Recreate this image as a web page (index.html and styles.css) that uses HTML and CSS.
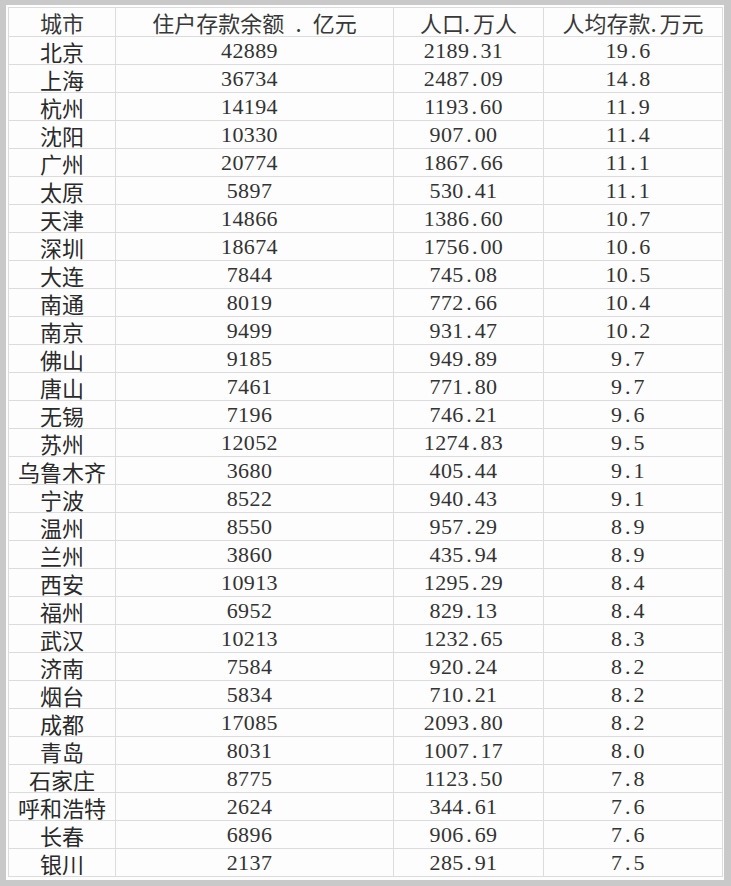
FILE: index.html
```html
<!DOCTYPE html>
<html lang="zh-CN">
<head>
<meta charset="utf-8">
<title>城市人均存款</title>
<link rel="stylesheet" href="styles.css">
</head>
<body>
<div class="frame">
<table class="sheet">
<colgroup><col class="c-city"><col class="c-dep"><col class="c-pop"><col class="c-per"></colgroup>
<thead>
<tr class="head"><th>城市</th><th>住户存款余额<span class="wp">.</span>亿元</th><th>人口<span class="hp">.</span>万人</th><th>人均存款<span class="hp">.</span>万元</th></tr>
</thead>
<tbody>
<tr><td class="city">北京</td><td class="num">42889</td><td class="num">2189<span class="pt">.</span>31</td><td class="num">19<span class="pt">.</span>6</td></tr>
<tr><td class="city">上海</td><td class="num">36734</td><td class="num">2487<span class="pt">.</span>09</td><td class="num">14<span class="pt">.</span>8</td></tr>
<tr><td class="city">杭州</td><td class="num">14194</td><td class="num">1193<span class="pt">.</span>60</td><td class="num">11<span class="pt">.</span>9</td></tr>
<tr><td class="city">沈阳</td><td class="num">10330</td><td class="num">907<span class="pt">.</span>00</td><td class="num">11<span class="pt">.</span>4</td></tr>
<tr><td class="city">广州</td><td class="num">20774</td><td class="num">1867<span class="pt">.</span>66</td><td class="num">11<span class="pt">.</span>1</td></tr>
<tr><td class="city">太原</td><td class="num">5897</td><td class="num">530<span class="pt">.</span>41</td><td class="num">11<span class="pt">.</span>1</td></tr>
<tr><td class="city">天津</td><td class="num">14866</td><td class="num">1386<span class="pt">.</span>60</td><td class="num">10<span class="pt">.</span>7</td></tr>
<tr><td class="city">深圳</td><td class="num">18674</td><td class="num">1756<span class="pt">.</span>00</td><td class="num">10<span class="pt">.</span>6</td></tr>
<tr><td class="city">大连</td><td class="num">7844</td><td class="num">745<span class="pt">.</span>08</td><td class="num">10<span class="pt">.</span>5</td></tr>
<tr><td class="city">南通</td><td class="num">8019</td><td class="num">772<span class="pt">.</span>66</td><td class="num">10<span class="pt">.</span>4</td></tr>
<tr><td class="city">南京</td><td class="num">9499</td><td class="num">931<span class="pt">.</span>47</td><td class="num">10<span class="pt">.</span>2</td></tr>
<tr><td class="city">佛山</td><td class="num">9185</td><td class="num">949<span class="pt">.</span>89</td><td class="num">9<span class="pt">.</span>7</td></tr>
<tr><td class="city">唐山</td><td class="num">7461</td><td class="num">771<span class="pt">.</span>80</td><td class="num">9<span class="pt">.</span>7</td></tr>
<tr><td class="city">无锡</td><td class="num">7196</td><td class="num">746<span class="pt">.</span>21</td><td class="num">9<span class="pt">.</span>6</td></tr>
<tr><td class="city">苏州</td><td class="num">12052</td><td class="num">1274<span class="pt">.</span>83</td><td class="num">9<span class="pt">.</span>5</td></tr>
<tr><td class="city">乌鲁木齐</td><td class="num">3680</td><td class="num">405<span class="pt">.</span>44</td><td class="num">9<span class="pt">.</span>1</td></tr>
<tr><td class="city">宁波</td><td class="num">8522</td><td class="num">940<span class="pt">.</span>43</td><td class="num">9<span class="pt">.</span>1</td></tr>
<tr><td class="city">温州</td><td class="num">8550</td><td class="num">957<span class="pt">.</span>29</td><td class="num">8<span class="pt">.</span>9</td></tr>
<tr><td class="city">兰州</td><td class="num">3860</td><td class="num">435<span class="pt">.</span>94</td><td class="num">8<span class="pt">.</span>9</td></tr>
<tr><td class="city">西安</td><td class="num">10913</td><td class="num">1295<span class="pt">.</span>29</td><td class="num">8<span class="pt">.</span>4</td></tr>
<tr><td class="city">福州</td><td class="num">6952</td><td class="num">829<span class="pt">.</span>13</td><td class="num">8<span class="pt">.</span>4</td></tr>
<tr><td class="city">武汉</td><td class="num">10213</td><td class="num">1232<span class="pt">.</span>65</td><td class="num">8<span class="pt">.</span>3</td></tr>
<tr><td class="city">济南</td><td class="num">7584</td><td class="num">920<span class="pt">.</span>24</td><td class="num">8<span class="pt">.</span>2</td></tr>
<tr><td class="city">烟台</td><td class="num">5834</td><td class="num">710<span class="pt">.</span>21</td><td class="num">8<span class="pt">.</span>2</td></tr>
<tr><td class="city">成都</td><td class="num">17085</td><td class="num">2093<span class="pt">.</span>80</td><td class="num">8<span class="pt">.</span>2</td></tr>
<tr><td class="city">青岛</td><td class="num">8031</td><td class="num">1007<span class="pt">.</span>17</td><td class="num">8<span class="pt">.</span>0</td></tr>
<tr><td class="city">石家庄</td><td class="num">8775</td><td class="num">1123<span class="pt">.</span>50</td><td class="num">7<span class="pt">.</span>8</td></tr>
<tr><td class="city">呼和浩特</td><td class="num">2624</td><td class="num">344<span class="pt">.</span>61</td><td class="num">7<span class="pt">.</span>6</td></tr>
<tr><td class="city">长春</td><td class="num">6896</td><td class="num">906<span class="pt">.</span>69</td><td class="num">7<span class="pt">.</span>6</td></tr>
<tr><td class="city">银川</td><td class="num">2137</td><td class="num">285<span class="pt">.</span>91</td><td class="num">7<span class="pt">.</span>5</td></tr>
</tbody>
</table>
</div>
</body>
</html>
```
FILE: styles.css
```css
html, body {
  margin: 0;
  padding: 0;
  background: #c9c9c9;
}
body {
  width: 731px;
  height: 886px;
  overflow: hidden;
}
.frame {
  margin: 5px 7px 0 6px;
  width: 718px;
  height: 875px;
  box-sizing: border-box;
  padding: 2px 0 0 2px;
  background: #fdfdfd;
}
.sheet {
  border-collapse: collapse;
  table-layout: fixed;
  width: 714px;
  color: #2e2e2e;
  font-family: "Noto Sans CJK SC", sans-serif;
  font-size: 22px;
}
.c-city { width: 107px; }
.c-dep { width: 278px; }
.c-pop { width: 150px; }
.c-per { width: 179px; }
.sheet th, .sheet td {
  border: 1px solid #dcdcdc;
  padding: 0;
  text-align: center;
  white-space: nowrap;
  line-height: 26px;
}
.sheet th {
  font-weight: normal;
  height: 28px;
  color: #383838;
}
.sheet td {
  height: 27px;
}
.city {
  color: #2a2a2a;
}
.num {
  font-family: "Liberation Serif", "Noto Sans CJK SC", serif;
  font-size: 22px;
  letter-spacing: 0.4px;
  padding-right: 10px !important;
  color: #333;
}
.pt {
  display: inline-block;
  width: 0.5em;
  text-align: center;
}
.wp {
  display: inline-block;
  width: 1.3em;
  text-align: center;
}
.hp {
  display: inline-block;
  width: 0.4em;
  text-align: left;
}
```
